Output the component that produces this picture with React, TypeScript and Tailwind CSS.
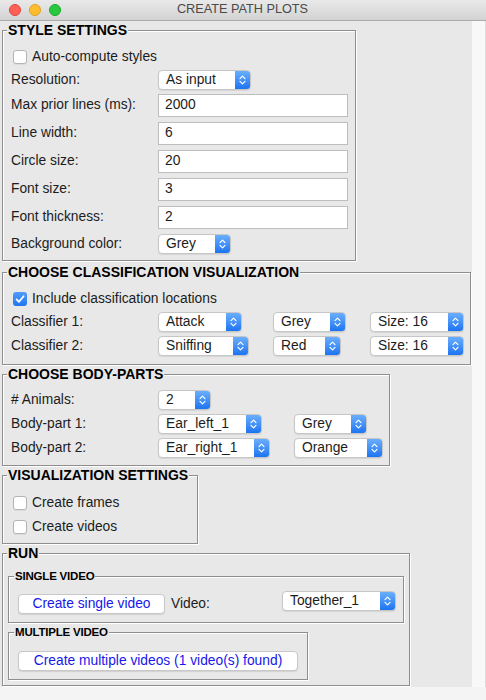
import React from "react";

function Chevrons() {
  return (
    <svg width="7" height="12" viewBox="0 0 7 12" fill="none" stroke="white" strokeWidth="1.2" strokeLinecap="round" strokeLinejoin="round">
      <path d="M1 4.6 3.5 2.1 6 4.6" />
      <path d="M1 7.4 3.5 9.9 6 7.4" />
    </svg>
  );
}

function Dropdown({ value, w }: { value: string; w: string }) {
  return (
    <div className={`${w} h-[20px] flex shrink-0 rounded-[4px] bg-white border border-[#c6c6c6] shadow-[0_1px_1px_rgba(0,0,0,0.08)] overflow-hidden`}>
      <div className="flex-1 pl-[7px] flex items-center text-[13.8px] text-[#1c1c1c] whitespace-nowrap">{value}</div>
      <div className="w-[15px] flex items-center justify-center bg-gradient-to-b from-[#6aaefc] to-[#1a74f1]">
        <Chevrons />
      </div>
    </div>
  );
}

function Checkbox({ checked }: { checked?: boolean }) {
  if (checked) {
    return (
      <div className="w-[14px] h-[14px] shrink-0 rounded-[3px] bg-gradient-to-b from-[#4f9bfa] to-[#1f77f2] flex items-center justify-center">
        <svg width="12" height="12" viewBox="0 0 12 12" fill="none" stroke="white" strokeWidth="1.8" strokeLinecap="round" strokeLinejoin="round">
          <path d="M2.6 6.4 5 8.8 9.6 3.2" />
        </svg>
      </div>
    );
  }
  return <div className="w-[14px] h-[14px] shrink-0 rounded-[3px] bg-white border border-[#b4b4b4] shadow-[0_1px_0_rgba(0,0,0,0.05)]" />;
}

function CheckRow({ label, checked, className = "" }: { label: string; checked?: boolean; className?: string }) {
  return (
    <div className={`h-[22px] flex items-center ml-[2px] ${className}`}>
      <Checkbox checked={checked} />
      <span className="ml-[5px] text-[13.8px] whitespace-nowrap">{label}</span>
    </div>
  );
}

function EntryRow({ label, value, className = "" }: { label: string; value: string; className?: string }) {
  return (
    <div className={`h-[23px] flex items-center ${className}`}>
      <span className="w-[147px] text-[13.8px] whitespace-nowrap">{label}</span>
      <div className="w-[190px] h-[23px] bg-white border border-[#bdbdbd] pl-[6px] flex items-center text-[13.8px]">{value}</div>
    </div>
  );
}

function Frame({
  label,
  small,
  className = "",
  children,
}: {
  label: string;
  small?: boolean;
  className?: string;
  children?: React.ReactNode;
}) {
  return (
    <div className={`relative shrink-0 border border-[#8e8e8e] shadow-[inset_1px_1px_0_#fff,1px_1px_0_#fff] ${className}`}>
      {small ? (
        <span className="absolute left-[5px] top-[-8px] px-[1px] bg-[#e8e8e8] font-bold text-[11.5px] leading-[14px] text-black tracking-[-0.2px] whitespace-nowrap">
          {label}
        </span>
      ) : (
        <span className="absolute left-[4px] top-[-9px] px-[1px] bg-[#e8e8e8] font-bold text-[14px] leading-[16px] text-black whitespace-nowrap">
          {label}
        </span>
      )}
      {children}
    </div>
  );
}

function Button({ label, w }: { label: string; w: string }) {
  return (
    <button className={`${w} h-[20px] shrink-0 rounded-[4px] bg-white border border-[#c8c8c8] shadow-[0_1px_1px_rgba(0,0,0,0.1)] flex items-center justify-center text-[13.8px] text-[#1717ea] whitespace-nowrap`}>
      {label}
    </button>
  );
}

function Label({ text, w = "w-[147px]" }: { text: string; w?: string }) {
  return <span className={`${w} shrink-0 text-[13.8px] whitespace-nowrap`}>{text}</span>;
}

export default function App() {
  return (
    <div className="w-[486px] h-[700px] bg-[#f6f6f6] flex flex-col text-[#1c1c1c] font-[family-name:'Liberation_Sans',Arial,sans-serif] overflow-hidden">
      {/* Title bar */}
      <div className="h-[21px] shrink-0 border-b border-[#ababab] bg-gradient-to-b from-[#e9e9e9] to-[#d3d3d3] flex items-center">
        <div className="flex items-center gap-[8px] pl-[9px]">
          <div className="w-[12px] h-[12px] rounded-full bg-[#fe5f57] border border-[#e0443e]" />
          <div className="w-[12px] h-[12px] rounded-full bg-[#febc2e] border border-[#dea123]" />
          <div className="w-[12px] h-[12px] rounded-full bg-[#28c840] border border-[#1aab29]" />
        </div>
        <div className="flex-1 flex justify-center pr-[62px] text-[12.7px] text-[#4a4a4a]">CREATE PATH PLOTS</div>
      </div>

      <div className="flex shrink-0">
        {/* Content */}
        <div className="w-[472px] h-[666px] bg-[#e8e8e8] flex flex-col items-start">
          <Frame label="STYLE SETTINGS" className="mt-[9px] ml-[2px] w-[354px] h-[231px] pt-[15px] pl-[8px]">
            <CheckRow label="Auto-compute styles" />
            <div className="mt-[2px] h-[20px] flex items-center">
              <Label text="Resolution:" />
              <Dropdown value="As input" w="w-[93px]" />
            </div>
            <EntryRow className="mt-[4px]" label="Max prior lines (ms):" value="2000" />
            <EntryRow className="mt-[5px]" label="Line width:" value="6" />
            <EntryRow className="mt-[5px]" label="Circle size:" value="20" />
            <EntryRow className="mt-[5px]" label="Font size:" value="3" />
            <EntryRow className="mt-[5px]" label="Font thickness:" value="2" />
            <div className="mt-[5px] h-[20px] flex items-center">
              <Label text="Background color:" />
              <Dropdown value="Grey" w="w-[73px]" />
            </div>
          </Frame>

          <Frame label="CHOOSE CLASSIFICATION VISUALIZATION" className="mt-[11px] ml-[2px] w-[469px] h-[93px] pt-[15px] pl-[8px]">
            <CheckRow label="Include classification locations" checked />
            <div className="mt-[2px] h-[20px] flex items-center">
              <Label text="Classifier 1:" />
              <div className="w-[115px] shrink-0"><Dropdown value="Attack" w="w-[84px]" /></div>
              <div className="w-[97px] shrink-0"><Dropdown value="Grey" w="w-[73px]" /></div>
              <Dropdown value="Size: 16" w="w-[94px]" />
            </div>
            <div className="mt-[4px] h-[20px] flex items-center">
              <Label text="Classifier 2:" />
              <div className="w-[115px] shrink-0"><Dropdown value="Sniffing" w="w-[91px]" /></div>
              <div className="w-[97px] shrink-0"><Dropdown value="Red" w="w-[68px]" /></div>
              <Dropdown value="Size: 16" w="w-[94px]" />
            </div>
          </Frame>

          <Frame label="CHOOSE BODY-PARTS" className="mt-[9px] ml-[2px] w-[388px] h-[92px] pt-[15px] pl-[8px]">
            <div className="h-[20px] flex items-center">
              <Label text="# Animals:" />
              <Dropdown value="2" w="w-[53px]" />
            </div>
            <div className="mt-[4px] h-[20px] flex items-center">
              <Label text="Body-part 1:" />
              <div className="w-[136px] shrink-0"><Dropdown value="Ear_left_1" w="w-[104px]" /></div>
              <Dropdown value="Grey" w="w-[73px]" />
            </div>
            <div className="mt-[4px] h-[20px] flex items-center">
              <Label text="Body-part 2:" />
              <div className="w-[136px] shrink-0"><Dropdown value="Ear_right_1" w="w-[112px]" /></div>
              <Dropdown value="Orange" w="w-[89px]" />
            </div>
          </Frame>

          <Frame label="VISUALIZATION SETTINGS" className="mt-[9px] ml-[2px] w-[196px] h-[69px] pt-[16px] pl-[8px]">
            <CheckRow label="Create frames" />
            <CheckRow className="mt-[2px]" label="Create videos" />
          </Frame>

          <Frame label="RUN" className="mt-[9px] ml-[2px] w-[408px] h-[133px] pt-[22px] pl-[5px]">
            <Frame label="SINGLE VIDEO" small className="w-[396px] h-[47px] pt-[14px] pl-[9px]">
              <div className="flex items-start">
                <div className="mt-[3px]"><Button label="Create single video" w="w-[147px]" /></div>
                <div className="mt-[3px] h-[20px] w-[117px] pl-[6px] flex items-center text-[13.8px]">Video:</div>
                <Dropdown value="Together_1" w="w-[114px]" />
              </div>
            </Frame>
            <Frame label="MULTIPLE VIDEO" small className="mt-[9px] w-[300px] h-[48px] pt-[18px] pl-[9px]">
              <Button label="Create multiple videos (1 video(s) found)" w="w-[280px]" />
            </Frame>
          </Frame>
        </div>
        {/* Right strip */}
        <div className="w-[14px] h-[666px] bg-[#f8f8f8] border-r border-[#dedede]" />
      </div>
      <div className="flex-1 bg-[#f4f4f4]" />
    </div>
  );
}
